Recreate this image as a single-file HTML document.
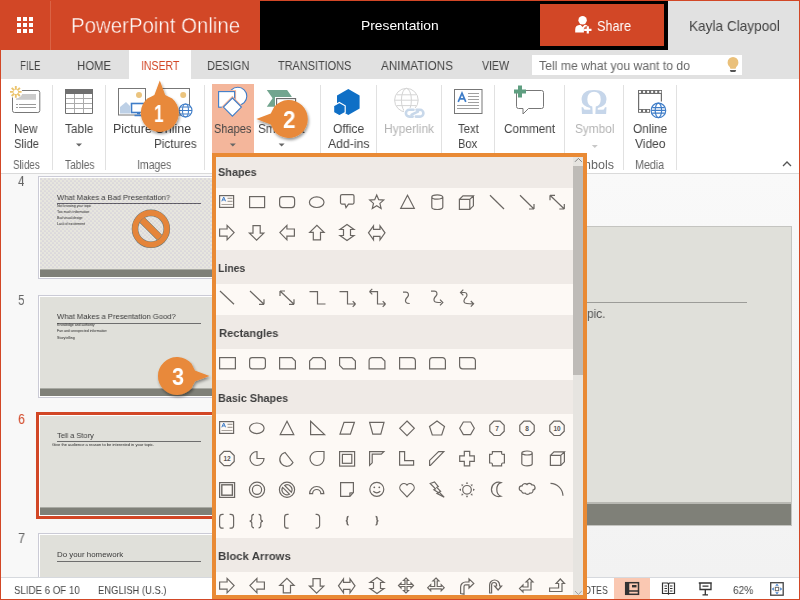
<!DOCTYPE html>
<html><head><meta charset="utf-8"><title>PowerPoint Online</title>
<style>
*{margin:0;padding:0;box-sizing:border-box}
html,body{width:800px;height:600px;overflow:hidden;background:#fff}
body{position:relative;font-family:"Liberation Sans",sans-serif;color:#444}
.a{position:absolute}
.t{position:absolute;white-space:nowrap;line-height:1;transform-origin:0 0;will-change:transform}
svg.full{position:absolute;left:0;top:0;width:800px;height:600px;overflow:visible}
#win{position:absolute;left:0;top:0;width:800px;height:600px;border:1px solid #D24726;pointer-events:none}
#hdr{left:0;top:0;width:260px;height:50px;background:#D24726}
#blk{left:260px;top:0;width:408px;height:50px;background:#000}
#usr{left:668px;top:0;width:132px;height:50px;background:#E1E1E1}
#share{left:540px;top:4px;width:124px;height:42px;background:#D24726}
#tabs{left:0;top:50px;width:800px;height:29px;background:#E1E1E1}
#ins{left:129px;top:50px;width:62px;height:29px;background:#fff}
#search{left:532px;top:55px;width:210px;height:20px;background:#fff}
#rib{left:0;top:79px;width:800px;height:95px;background:#fff;border-bottom:1px solid #DADADA}
.sep{position:absolute;width:1px;top:85px;height:85px;background:#E1E1E1}
#thumbs{left:0;top:174px;width:240px;height:403px;background:#F7F7F7}
#main{left:240px;top:174px;width:560px;height:403px;background:#F4F4F4}
#status{left:0;top:577px;width:800px;height:23px;background:#fff;border-top:1px solid #E1E1E1}
#panel{left:212px;top:153px;width:375px;height:446px;background:#FDF9F5;border:4px solid #E98A35;overflow:hidden}

</style></head><body>
<div class="a" id="hdr"></div>
<div class="a" id="blk"></div>
<div class="a" id="usr"></div>
<div class="a" id="share"></div>
<div class="a" id="tabs"></div>
<div class="a" id="ins"></div>
<div class="a" id="search"></div>
<div class="a" id="rib"></div>
<div class="a" id="thumbs"></div>
<div class="a" id="main"></div>
<div class="a" id="status"></div>
<!-- header decorations -->
<div class="a" style="left:50px;top:0;width:1px;height:50px;background:#E07A5F;opacity:.55"></div>
<svg class="full" viewBox="0 0 800 600">
 <g fill="#fff">
  <rect x="17" y="17" width="4" height="4"/><rect x="23" y="17" width="4" height="4"/><rect x="29" y="17" width="4" height="4"/>
  <rect x="17" y="23" width="4" height="4"/><rect x="23" y="23" width="4" height="4"/><rect x="29" y="23" width="4" height="4"/>
  <rect x="17" y="29" width="4" height="4"/><rect x="23" y="29" width="4" height="4"/><rect x="29" y="29" width="4" height="4"/>
 </g>
 <!-- share person icon -->
 <g fill="#fff">
  <circle cx="582.6" cy="20.2" r="4.2"/>
  <path d="M575.2 32.6v-3.2q0-4.3 5.3-4.6l2 2.2l2.2-2.2q1.6 0.1 2.6 0.8v2.6h-3.4v4.4z"/>
 </g>
 <path d="M587.8 26.2v7.4M584.1 29.9h7.4" stroke="#D24726" stroke-width="4.6"/>
 <path d="M587.8 26.2v7.4M584.1 29.9h7.4" stroke="#fff" stroke-width="2.2"/>
 <!-- bulb -->
 <path d="M733 57a5.4 5.4 0 0 1 5.4 5.4c0 2.2-1.2 3.4-2.2 4.6l-0.6 1.8h-5.2l-0.6-1.8c-1-1.2-2.2-2.4-2.2-4.6a5.4 5.4 0 0 1 5.4-5.4z" fill="#EAC07A"/>
 <path d="M729.8 70h6.4l-0.9 1.9h-4.6z" fill="#555"/>
</svg>
<!-- ribbon separators -->
<div class="sep" style="left:52px"></div>
<div class="sep" style="left:105px"></div>
<div class="sep" style="left:204px"></div>
<div class="sep" style="left:320px"></div>
<div class="sep" style="left:376px"></div>
<div class="sep" style="left:441px"></div>
<div class="sep" style="left:494px"></div>
<div class="sep" style="left:564px"></div>
<div class="sep" style="left:623px"></div>
<div class="sep" style="left:676px"></div>
<!-- shapes highlight -->
<div class="a" style="left:212px;top:84px;width:42px;height:70px;background:#F4B69B"></div>
<svg class="full" viewBox="0 0 800 600">
 <!-- New slide -->
 <rect x="12.5" y="90.5" width="27.3" height="22" rx="2" fill="#fff" stroke="#777"/>
 <path d="M16 94h20v5.8h-20z" fill="#CBCBCB"/>
 <path d="M16 104.5h2M19 104.5h17M16 107.5h2M19 107.5h17" stroke="#999" stroke-width="1"/>
 <circle cx="15.8" cy="91.9" r="6.6" fill="#fff"/>
 <path d="M18.00 91.90L21.60 91.90M17.36 93.46L19.90 96.00M15.80 94.10L15.80 97.70M14.24 93.46L11.70 96.00M13.60 91.90L10.00 91.90M14.24 90.34L11.70 87.80M15.80 89.70L15.80 86.10M17.36 90.34L19.90 87.80" stroke="#EBC46E" stroke-width="1.9"/>
 <!-- Table -->
 <path d="M66 98.5h26M66 103.5h26M66 108.5h26M74.5 94v19M83.5 94v19" stroke="#ABABAB" fill="none"/>
 <rect x="65" y="89" width="28" height="5" fill="#707070"/>
 <path d="M65.5 89v24.5h27V89" stroke="#707070" fill="none"/>
 <path d="M76 143.5h6l-3 3z" fill="#666"/>
 <!-- Picture -->
 <rect x="118.5" y="88.5" width="27" height="26.5" fill="#fff" stroke="#777"/>
 <circle cx="139" cy="95" r="3" fill="#EBC47E"/>
 <path d="M120 113.5L120 107L126 102L130 106L130 113.5Z" fill="#BDD0E6"/>
 <rect x="131.5" y="103.5" width="13.5" height="9" fill="#fff" stroke="#3F7DC8" stroke-width="1.6"/>
 <path d="M137 113.5h3M134.5 115.5h8" stroke="#3F7DC8" stroke-width="1.4"/>
 <!-- Online pictures -->
 <rect x="160.5" y="88.5" width="29" height="26.5" fill="#fff" stroke="#777"/>
 <circle cx="183.2" cy="95" r="3" fill="#EBC47E"/>
 <g stroke="#3F7DC8" stroke-width="1.1" fill="#fff">
  <circle cx="185.5" cy="110.5" r="6.5"/>
  <ellipse cx="185.5" cy="110.5" rx="3" ry="6.5" fill="none"/>
  <path d="M179 110.5h13M180 107h11M180 114h11" fill="none"/>
 </g>
 <!-- Shapes icon -->
 <circle cx="237.8" cy="96.2" r="9" fill="#fff" stroke="#3F7DC8" stroke-width="1.1"/>
 <rect x="218.6" y="91.6" width="16" height="15.6" fill="#fff" stroke="#F4B69B" stroke-width="3"/>
 <rect x="218.6" y="91.6" width="16" height="15.6" fill="#fff" stroke="#3F7DC8" stroke-width="1.1"/>
 <path d="M232.4 98l9 9.1l-9 9.1l-9 -9.1z" fill="#fff" stroke="#F4B69B" stroke-width="3"/>
 <path d="M232.4 98l9 9.1l-9 9.1l-9 -9.1z" fill="#fff" stroke="#3F7DC8" stroke-width="1.1"/>
 <path d="M229.8 143.5h6l-3 3z" fill="#666"/>
 <!-- SmartArt -->
 <path d="M266.8 90h20.3l4.6 6.6l-4.6 10.2h-20.3l5.8-8.6z" fill="#72A58F"/>
 <rect x="275" y="97" width="22" height="17" fill="#fff"/>
 <rect x="276.6" y="98.6" width="19" height="15" fill="#fff" stroke="#666" stroke-width="1.1"/>
 <path d="M278.6 143.5h6l-3 3z" fill="#666"/>
 <!-- Office Add-ins -->
 <path d="M348.3 89l11.3 6.5v13l-11.3 6.5l-11.3 -6.5v-13z" fill="#0F6FC6"/>
 <path d="M339.4 102.5l5.8 3.3v6.6l-5.8 3.3l-5.8 -3.3v-6.6z" fill="#0F6FC6" stroke="#fff" stroke-width="1.2"/>
 <!-- Hyperlink -->
 <g stroke="#D4D4D4" stroke-width="1" fill="none">
  <circle cx="406.4" cy="100.2" r="11.8"/>
  <ellipse cx="406.4" cy="100.2" rx="5" ry="11.8"/>
  <path d="M394.6 100.2h23.6M396.5 94.8h19.8M396.5 105.6h19.8"/>
 </g>
 <rect x="404" y="108" width="21" height="10" fill="#fff"/>
 <g stroke="#C8D8EA" stroke-width="2.6" fill="none" stroke-linecap="round">
  <path d="M413.5 109.8h-4.2a3.4 3.4 0 0 0 0 6.8h3.4"/>
  <path d="M415.8 116.6h4.2a3.4 3.4 0 0 0 0-6.8h-3.4"/>
  <path d="M411.6 114.6l6.4-3"/>
 </g>
 <!-- Text Box -->
 <rect x="454.5" y="89.5" width="27.5" height="24" fill="#fff" stroke="#777"/>
 <path d="M458.2 101.8l3.8-8.6l3.8 8.6M459.5 98.8h5" stroke="#3F7DC8" stroke-width="1.7" fill="none"/>
 <path d="M468 93.5h11M468 96.5h11M468 99.5h11M468 102.5h11M457 105.5h22M457 108.5h22" stroke="#A0A0A0"/>
 <!-- Comment -->
 <path d="M518.5 90.5h23a2 2 0 0 1 2 2v14a2 2 0 0 1 -2 2h-13l-5.5 5.5v-5.5h-4.5a2 2 0 0 1 -2 -2v-14a2 2 0 0 1 2 -2z" fill="#fff" stroke="#777"/>
 <path d="M520 85.5v12M514 91.5h12" stroke="#5E9E80" stroke-width="4"/>
 <!-- Symbol -->
 <path d="M591.8 145h6l-3 3z" fill="#C8C8C8"/>
 <!-- Online Video -->
 <rect x="638" y="90" width="24" height="4" fill="#6E6E6E"/>
 <rect x="639.00" y="90.9" width="2" height="2" fill="#fff"/><rect x="643.05" y="90.9" width="2" height="2" fill="#fff"/><rect x="647.10" y="90.9" width="2" height="2" fill="#fff"/><rect x="651.15" y="90.9" width="2" height="2" fill="#fff"/><rect x="655.20" y="90.9" width="2" height="2" fill="#fff"/><rect x="659.25" y="90.9" width="2" height="2" fill="#fff"/>
 <path d="M638.6 94v15M661.4 94v7.6" stroke="#6E6E6E" stroke-width="1.2"/>
 <rect x="638" y="109" width="12" height="3.8" fill="#6E6E6E"/>
 <rect x="639.00" y="109.9" width="2" height="2" fill="#fff"/><rect x="643.05" y="109.9" width="2" height="2" fill="#fff"/><rect x="647.10" y="109.9" width="2" height="2" fill="#fff"/>
 <g stroke="#3F7DC8" stroke-width="1.2" fill="#fff">
  <circle cx="658.4" cy="110.4" r="7.3"/>
  <ellipse cx="658.4" cy="110.4" rx="3.2" ry="7.3" fill="none"/>
  <path d="M651.2 110.4h14.4M652.2 107.6h12.4M652.2 113.2h12.4" fill="none"/>
 </g>
 <!-- collapse caret -->
 <path d="M783 166l4-4l4 4" stroke="#555" stroke-width="1.3" fill="none"/>
</svg>
<div class="t" style="left:579.7px;top:84.9px;font-size:35px;font-family:'Liberation Serif';color:#C6D6EA;font-weight:bold">&#937;</div>
<!-- main area gradient -->
<div class="a" style="left:216px;top:174px;width:584px;height:403px;background:linear-gradient(#F9F9F9,#F2F2F2)"></div>
<div class="a" style="left:0;top:174px;width:216px;height:403px;background:#F8F8F8"></div>
<!-- main slide -->
<div class="a" style="left:560px;top:226px;width:232px;height:300px;background:#E0E0DA;border:1px solid #C4C4C0"></div>
<div class="a" style="left:561px;top:502px;width:230px;height:2px;background:#B9B9B3"></div>
<div class="a" style="left:561px;top:504px;width:230px;height:21px;background:#7F8078"></div>
<div class="a" style="left:561px;top:301.5px;width:186px;height:1.6px;background:#9C9C98"></div>
<!-- thumbnails -->
<style>
.th{position:absolute;left:38px;width:180px;border:1px solid #CBCBD6;padding:1px;background:#fff}
.sl{position:relative;width:176px;height:99px;background:#E0E0DA;overflow:hidden}
.band{position:absolute;left:0;bottom:0;width:100%;height:8px;background:#7F8078;border-top:1px solid #A9AAA3}
.ul{position:absolute;left:17.4px;width:144px;height:1px;background:#6E6E6E}
.dots{background-color:#E7E6DE}
</style>
<div class="th" style="top:176px"><div class="sl dots">
 <div class="ul" style="top:25px;height:1.3px;background:#5C5A60"></div>
 <div class="band"></div>
</div></div>
<svg class="full" viewBox="0 0 800 600">
 <defs><pattern id="dp" x="40" y="178" width="4" height="4" patternUnits="userSpaceOnUse">
  <circle cx="1" cy="1" r="0.6" fill="#9D8FD0"/><circle cx="3" cy="3" r="0.6" fill="#9D8FD0"/>
 </pattern></defs>
 <rect x="40" y="178" width="176" height="90.5" fill="url(#dp)" opacity="0.6"/>
</svg>
<svg class="full" viewBox="0 0 800 600">
 <defs><clipPath id="ic"><circle cx="150.9" cy="228.8" r="12.7"/></clipPath></defs>
 <circle cx="150.9" cy="228.8" r="15.9" fill="none" stroke="#6A7A78" stroke-width="6.6"/>
 <circle cx="150.9" cy="228.8" r="15.9" fill="none" stroke="#E5853A" stroke-width="5.6"/>
 <g clip-path="url(#ic)">
  <path d="M139.6 217.5L162.2 240.1" stroke="#6A7A78" stroke-width="7.4"/>
  <path d="M139.6 217.5L162.2 240.1" stroke="#E5853A" stroke-width="6.4"/>
 </g>
</svg>
<div class="th" style="top:295px"><div class="sl">
 <div class="ul" style="top:25.5px"></div>
 <div class="band"></div>
</div></div>
<div class="th" style="left:36px;top:412px;border:3px solid #D24726;padding:1px;width:184px"><div class="sl">
 <div class="ul" style="top:25px"></div>
 <div class="band"></div>
</div></div>
<div class="th" style="top:533px"><div class="sl">
 <div class="ul" style="top:26px"></div>
</div></div>
<!-- status bar -->
<div class="a" style="left:0;top:577px;width:800px;height:23px;background:#fff;border-top:1px solid #D6D9DE"></div>
<div class="a" style="left:614px;top:578px;width:36px;height:22px;background:#FAC8B2"></div>
<svg class="full" viewBox="0 0 800 600">
 <g fill="none" stroke="#333" stroke-width="1.5">
  <rect x="625.7" y="582.7" width="12.8" height="11.6"/>
  <path d="M628.5 582.7v11.6M628.5 591h10"/>
 </g>
 <rect x="625.7" y="582.7" width="3" height="11.6" fill="#333"/>
 <rect x="632" y="585" width="4.5" height="2.4" fill="#333"/>
 <g fill="none" stroke="#333" stroke-width="1.2">
  <path d="M662.5 583v10.5h12V583h-5.2l-0.8 0.8l-0.8-0.8z"/>
  <path d="M668.5 583.8v11M664.5 586h2.5M664.5 588.5h2.5M664.5 591h2.5M670 586h2.5M670 588.5h2.5M670 591h2.5"/>
 </g>
 <g fill="none" stroke="#333" stroke-width="1.3">
  <path d="M698.8 583h13M700 583.5v6h11v-6M705.3 589.5v5M702.5 594.8h5.5M702.5 586.2h6"/>
 </g>
 <rect x="770.7" y="582.7" width="12.5" height="12.5" fill="none" stroke="#444" stroke-width="1.3"/>
 <rect x="775.3" y="587.3" width="3.4" height="3.4" fill="none" stroke="#666" stroke-width="1"/>
 <g fill="#3F7DC8">
  <path d="M777 583.8l1.8 2h-3.6z"/><path d="M777 594.2l1.8-2h-3.6z"/>
  <path d="M771.8 589l2-1.8v3.6z"/><path d="M782.2 589l-2-1.8v3.6z"/>
 </g>
</svg>

<div class="t" style="left:71.19px;top:14.75px;font-size:22.5px;color:#fff;transform:scaleX(0.908);-webkit-text-stroke:0.4px #D24726;">PowerPoint Online</div>
<div class="t" style="left:360.95px;top:19.43px;font-size:13.2px;color:#fff;transform:scaleX(1.048);">Presentation</div>
<div class="t" style="left:596.60px;top:19.41px;font-size:14.4px;color:#fff;transform:scaleX(0.885);">Share</div>
<div class="t" style="left:689.05px;top:19.41px;font-size:14.4px;color:#444;transform:scaleX(0.947);">Kayla Claypool</div>
<div class="t" style="left:19.75px;top:59.00px;font-size:13px;color:#444;transform:scaleX(0.747);">FILE</div>
<div class="t" style="left:77.38px;top:59.00px;font-size:13px;color:#444;transform:scaleX(0.874);">HOME</div>
<div class="t" style="left:140.69px;top:59.00px;font-size:13px;color:#D24726;transform:scaleX(0.807);">INSERT</div>
<div class="t" style="left:207.45px;top:59.00px;font-size:13px;color:#444;transform:scaleX(0.850);">DESIGN</div>
<div class="t" style="left:278.40px;top:59.00px;font-size:13px;color:#444;transform:scaleX(0.839);">TRANSITIONS</div>
<div class="t" style="left:381.20px;top:59.00px;font-size:13px;color:#444;transform:scaleX(0.901);">ANIMATIONS</div>
<div class="t" style="left:482.40px;top:59.00px;font-size:13px;color:#444;transform:scaleX(0.813);">VIEW</div>
<div class="t" style="left:538.60px;top:59.92px;font-size:12.5px;color:#666;transform:scaleX(0.979);">Tell me what you want to do</div>
<div class="t" style="left:13.66px;top:123.22px;font-size:12.5px;color:#444;transform:scaleX(0.937);">New</div>
<div class="t" style="left:13.50px;top:137.82px;font-size:12.5px;color:#444;transform:scaleX(0.898);">Slide</div>
<div class="t" style="left:13.00px;top:158.72px;font-size:12.5px;color:#666;transform:scaleX(0.787);">Slides</div>
<div class="t" style="left:64.70px;top:123.22px;font-size:12.5px;color:#444;transform:scaleX(0.946);">Table</div>
<div class="t" style="left:64.70px;top:158.72px;font-size:12.5px;color:#666;transform:scaleX(0.814);">Tables</div>
<div class="t" style="left:113.40px;top:123.22px;font-size:12.5px;color:#444;">Picture</div>
<div class="t" style="left:155.00px;top:123.22px;font-size:12.5px;color:#444;">Online</div>
<div class="t" style="left:154.06px;top:137.82px;font-size:12.5px;color:#444;transform:scaleX(0.943);">Pictures</div>
<div class="t" style="left:137.16px;top:158.72px;font-size:12.5px;color:#666;transform:scaleX(0.838);">Images</div>
<div class="t" style="left:213.80px;top:123.22px;font-size:12.5px;color:#444;transform:scaleX(0.880);">Shapes</div>
<div class="t" style="left:257.80px;top:123.22px;font-size:12.5px;color:#444;transform:scaleX(0.947);">SmartArt</div>
<div class="t" style="left:332.75px;top:123.22px;font-size:12.5px;color:#444;transform:scaleX(0.959);">Office</div>
<div class="t" style="left:327.90px;top:137.82px;font-size:12.5px;color:#444;transform:scaleX(0.978);">Add-ins</div>
<div class="t" style="left:383.64px;top:123.22px;font-size:12.5px;color:#B4B4B4;transform:scaleX(0.962);">Hyperlink</div>
<div class="t" style="left:458.20px;top:123.22px;font-size:12.5px;color:#444;transform:scaleX(0.908);">Text</div>
<div class="t" style="left:458.31px;top:137.82px;font-size:12.5px;color:#444;transform:scaleX(0.892);">Box</div>
<div class="t" style="left:504.20px;top:123.22px;font-size:12.5px;color:#444;transform:scaleX(0.943);">Comment</div>
<div class="t" style="left:575.00px;top:123.22px;font-size:12.5px;color:#B4B4B4;transform:scaleX(0.946);">Symbol</div>
<div class="t" style="left:566.02px;top:158.72px;font-size:12.5px;color:#666;">Symbols</div>
<div class="t" style="left:632.80px;top:123.22px;font-size:12.5px;color:#444;transform:scaleX(0.945);">Online</div>
<div class="t" style="left:634.80px;top:137.82px;font-size:12.5px;color:#444;transform:scaleX(0.962);">Video</div>
<div class="t" style="left:634.74px;top:158.72px;font-size:12.5px;color:#666;transform:scaleX(0.858);">Media</div>
<div class="t" style="left:17.75px;top:174.40px;font-size:14.3px;color:#666;transform:scaleX(0.812);">4</div>
<div class="t" style="left:17.75px;top:292.90px;font-size:14.3px;color:#666;transform:scaleX(0.812);">5</div>
<div class="t" style="left:17.80px;top:412.20px;font-size:14.3px;color:#D24726;transform:scaleX(0.875);">6</div>
<div class="t" style="left:17.80px;top:530.90px;font-size:14.3px;color:#666;transform:scaleX(0.900);">7</div>
<div class="t" style="left:57.40px;top:194.11px;font-size:7.9px;color:#3A3A3A;transform:scaleX(0.961);">What Makes a Bad Presentation?</div>
<div class="t" style="left:57.00px;top:204.75px;font-size:3.6px;color:#262626;transform:scaleX(0.944);">Not knowing your topic</div>
<div class="t" style="left:57.00px;top:210.75px;font-size:3.6px;color:#262626;transform:scaleX(0.946);">Too much information</div>
<div class="t" style="left:57.00px;top:217.45px;font-size:3.6px;color:#262626;transform:scaleX(0.905);">Bad visual design</div>
<div class="t" style="left:57.00px;top:223.45px;font-size:3.6px;color:#262626;transform:scaleX(0.934);">Lack of excitement</div>
<div class="t" style="left:57.40px;top:313.11px;font-size:7.9px;color:#3A3A3A;transform:scaleX(0.967);">What Makes a Presentation Good?</div>
<div class="t" style="left:57.00px;top:323.95px;font-size:3.6px;color:#262626;transform:scaleX(0.943);">Knowledge and authority</div>
<div class="t" style="left:57.00px;top:329.95px;font-size:3.6px;color:#262626;transform:scaleX(0.970);">Fun and unexpected information</div>
<div class="t" style="left:57.00px;top:336.95px;font-size:3.6px;color:#262626;transform:scaleX(0.984);">Storytelling</div>
<div class="t" style="left:57.30px;top:432.11px;font-size:7.9px;color:#3A3A3A;transform:scaleX(0.944);">Tell a Story</div>
<div class="t" style="left:51.70px;top:443.65px;font-size:3.6px;color:#262626;transform:scaleX(1.120);">Give the audience a reason to be interested in your topic.</div>
<div class="t" style="left:57.40px;top:551.01px;font-size:7.9px;color:#3A3A3A;">Do your homework</div>
<div class="t" style="left:14.00px;top:584.56px;font-size:10.8px;color:#444;transform:scaleX(0.897);">SLIDE 6 OF 10</div>
<div class="t" style="left:98.00px;top:584.56px;font-size:10.8px;color:#444;transform:scaleX(0.872);">ENGLISH (U.S.)</div>
<div class="t" style="left:577.80px;top:584.56px;font-size:10.8px;color:#444;transform:scaleX(0.800);">NOTES</div>
<div class="t" style="left:732.50px;top:584.56px;font-size:10.8px;color:#444;transform:scaleX(0.936);">62%</div>
<div class="t" style="left:587.00px;top:307.00px;font-size:13px;color:#555;transform:scaleX(0.918);">pic.</div>
<div class="a" id="panel">
 <div class="a" style="left:0;top:0;width:357px;height:31px;background:#EFEAE6"></div>
 <div class="a" style="left:0;top:93px;width:357px;height:34px;background:#EFEAE6"></div>
 <div class="a" style="left:0;top:158px;width:357px;height:34px;background:#EFEAE6"></div>
 <div class="a" style="left:0;top:223px;width:357px;height:34px;background:#EFEAE6"></div>
 <div class="a" style="left:0;top:381px;width:357px;height:34px;background:#EFEAE6"></div>
 <!-- scrollbar -->
 <div class="a" style="left:357px;top:0;width:10px;height:438px;background:#E6E4E0"></div>
 <div class="a" style="left:357px;top:9px;width:10px;height:209px;background:#BEBBB7"></div>
 <svg class="a" style="left:0;top:0" width="367" height="438" viewBox="216 157 367 438">
  <path d="M575 161.8l3.4-3.4l3.4 3.4" fill="none" stroke="#777" stroke-width="0.9"/>
  <path d="M575 591l3.4 3.4l3.4-3.4" fill="none" stroke="#999" stroke-width="0.9"/>
  <g fill="none" stroke="#6B6763" stroke-width="1.2" stroke-linejoin="miter">
  <!-- Shapes row1 cy 202 -->
   <rect x="219.6" y="195.6" width="14" height="11.8"/>
   <path d="M227.5 198.3h5M227.5 201.3h5M221.5 204.5h11" stroke="#A9A39D"/>
   <path d="M221.8 201.3l1.9-4.3l1.9 4.3M222.5 199.9h2.4" stroke="#3F7DC8" stroke-width="1"/>
   <rect x="249.6" y="196.6" width="15" height="11"/>
   <rect x="279.6" y="196.6" width="15" height="11" rx="3"/>
   <ellipse cx="316.7" cy="202.2" rx="7.3" ry="5.3"/>
   <path d="M342 194.6h10.5a1.5 1.5 0 0 1 1.5 1.5v6.5a1.5 1.5 0 0 1 -1.5 1.5h-4l-2.5 3.5l-1-3.5h-3a1.5 1.5 0 0 1 -1.5 -1.5v-6.5a1.5 1.5 0 0 1 1.5 -1.5z"/>
   <path d="M376.7 195l2 4.7l5 0.4l-3.8 3.3l1.2 5l-4.4-2.7l-4.4 2.7l1.2-5l-3.8-3.3l5-0.4z"/>
   <path d="M407.5 195.3l6.8 13h-13.6z"/>
   <path d="M431.8 197v10.3a5.5 2.2 0 0 0 11 0V197a5.5 2.2 0 0 0 -11 0a5.5 2.2 0 0 0 11 0"/>
   <path d="M459.4 199.4h10.4v10h-10.4zM459.4 199.4l3.6-3.6h10.4l-3.6 3.6M473.4 195.8v10l-3.6 3.6"/>
   <path d="M490 195.3l14 13.7"/>
   <path d="M520 195.3l14 13.7M534 209v-5M534 209h-5"/>
   <path d="M550 195.3l14.3 13.7M564.3 209v-5M564.3 209h-5M550 195.3v5M550 195.3h5"/>
  <!-- Shapes row2 cy 232.5 -->
   <path d="M219.6 229h7.5v-3.6l7 7.2l-7 7.2v-3.6h-7.5z"/>
   <path d="M253 225.6h7.2v7.5h3.6l-7.2 7l-7.2-7h3.6z"/>
   <path d="M294.4 229h-7.5v-3.6l-7 7.2l7 7.2v-3.6h7.5z"/>
   <path d="M313.3 239.8h7.2v-7.5h3.6l-7.2-7l-7.2 7h3.6z"/>
   <path d="M343.5 229.5v6l-3.5 0l7 5l7-5h-3.5v-6h3.5l-7-5l-7 5z"/>
   <path d="M373.5 229.3h6.5l0-3.5l5 7l-5 7v-3.5h-6.5v3.5l-5-7l5-7z"/>
  <!-- Lines row cy 297.5 -->
   <path d="M220 291l14 13.3"/>
   <path d="M250 291l14 13.3M264 304.3v-5M264 304.3h-5"/>
   <path d="M280 291l14 13.3M294 304.3v-5M294 304.3h-5M280 291v5M280 291h5"/>
   <path d="M309.5 291.6h8v12.4h8"/>
   <path d="M339.5 291.6h8v12.4h8M355.5 304l-2.8-2.8M355.5 304l-2.8 2.8"/>
   <path d="M369.5 291.6h8v12.4h8M385.5 304l-2.8-2.8M385.5 304l-2.8 2.8M369.5 291.6l2.8-2.8M369.5 291.6l2.8 2.8"/>
   <path d="M403 292.2h3c2.5 0 3.3 3 1.5 4.8c-2 2-2.6 3.6-1.6 5.2c0.6 1 1.5 1.3 3.8 1.3"/>
   <path d="M431 291.2h3.5c2.5 0 3.3 3 1.5 4.8c-2 2-2.6 3.6-1.6 5.2c0.6 1 1.5 1.3 6.5 1.3M440 299.7l2.8 2.8l-2.8 2.8"/>
   <path d="M460.5 292.5h4c2.5 0 3.3 3 1.5 4.8c-2 2-2.6 3.6-1.6 5.2c0.6 1 1.5 1.3 8.5 1.3M463.3 289.7l-2.8 2.8l2.8 2.8M470.8 301l2.8 2.8l-2.8 2.8"/>
  <!-- Rectangles cy 363 -->
   <rect x="219.6" y="357.6" width="15.8" height="11.2"/>
   <rect x="249.6" y="357.6" width="15.8" height="11.2" rx="2.5"/>
   <path d="M279.6 357.6h12.3l3.5 3.5v7.7h-15.8z"/>
   <path d="M313.1 357.6h8.8l3.5 3.5v7.7h-15.8v-7.7z"/>
   <path d="M339.6 357.6h12.3l3.5 3.5v7.7h-12.3l-3.5-3.5z"/>
   <path d="M372.6 357.6h8.8l3.5 3.5v7.7h-15.8v-8.2a3 3 0 0 1 3.5 -3z"/>
   <path d="M399.6 357.6h12.3a3.5 3.5 0 0 1 3.5 3.5v7.7h-15.8z"/>
   <path d="M432.6 357.6h9.8a3 3 0 0 1 3 3v8.2h-15.8v-8.2a3 3 0 0 1 3 -3z"/>
   <path d="M459.6 357.6h12.8a3 3 0 0 1 3 3v8.2h-12.8a3 3 0 0 1 -3 -3z"/>
  <!-- Basic r1 cy 428.5 -->
   <rect x="219.6" y="421.6" width="14" height="11.8"/>
   <path d="M227.5 424.3h5M227.5 427.3h5M221.5 430.5h11" stroke="#A9A39D"/>
   <path d="M221.8 427.3l1.9-4.3l1.9 4.3M222.5 425.9h2.4" stroke="#3F7DC8" stroke-width="1"/>
   <ellipse cx="256.8" cy="428.3" rx="7.3" ry="5.3"/>
   <path d="M287 421.3l6.8 13.3h-13.6z"/>
   <path d="M310.6 421.3l14 13.3h-14z"/>
   <path d="M344 422.3h10.4l-4 11.8h-10.4z"/>
   <path d="M369.6 422.3h14.4l-3.2 11.8h-8z"/>
   <path d="M407 421l7.3 7.3l-7.3 7.3l-7.3-7.3z"/>
   <path d="M437 421l7.5 5.4l-2.8 8.6h-9.4l-2.8-8.6z"/>
   <path d="M474.30 428.30L470.65 434.62L463.35 434.62L459.70 428.30L463.35 421.98L470.65 421.98Z"/>
   <path d="M504.21 431.28L499.98 435.51L494.02 435.51L489.79 431.28L489.79 425.32L494.02 421.09L499.98 421.09L504.21 425.32Z"/>
   <path d="M534.21 431.28L529.98 435.51L524.02 435.51L519.79 431.28L519.79 425.32L524.02 421.09L529.98 421.09L534.21 425.32Z"/>
   <path d="M564.21 431.28L559.98 435.51L554.02 435.51L549.79 431.28L549.79 425.32L554.02 421.09L559.98 421.09L564.21 425.32Z"/>
  <!-- Basic r2 cy 458.5 -->
   <path d="M234.21 461.48L229.98 465.71L224.02 465.71L219.79 461.48L219.79 455.52L224.02 451.29L229.98 451.29L234.21 455.52Z"/>
   <path d="M264 458.5a7 7 0 1 1 -7 -7v7z"/>
   <path d="M293 462.5a7 7 0 1 1 -8-10z"/>
   <path d="M324 451.5v7a7 7 0 1 1 -7 -7z"/>
   <rect x="339.6" y="451.6" width="15" height="14.5"/><rect x="342.4" y="454.4" width="9.4" height="8.9"/>
   <path d="M369.6 451.6h14.3l-2.6 2.6h-9.1v8.6l-2.6 2.6z"/>
   <path d="M399.6 451.6h5v9h9v4.6h-14z"/>
   <path d="M438.6 451.6H443.8L430.4 465.3H429.6V460.4Z"/>
   <path d="M464.3 451.3h5.4v4.6h4.6v5.4h-4.6v4.6h-5.4v-4.6h-4.6v-5.4h4.6z"/>
   <path d="M492.4 451.6h9.2v1.6q0 1.2 1.2 1.2h1.6v8.6h-1.6q-1.2 0-1.2 1.2v1.6h-9.2v-1.6q0-1.2-1.2-1.2h-1.6v-8.6h1.6q1.2 0 1.2-1.2z"/>
   <path d="M521.8 453v10.8a5.2 2 0 0 0 10.4 0V453a5.2 2 0 0 0 -10.4 0a5.2 2 0 0 0 10.4 0"/>
   <path d="M550.4 455.4h10.4v10h-10.4zM550.4 455.4l3.6-3.6h10.4l-3.6 3.6M564.4 451.8v10l-3.6 3.6"/>
  <!-- Basic r3 cy 489.5 -->
   <rect x="219.6" y="482.6" width="15" height="14.8"/><rect x="221.8" y="484.8" width="10.6" height="10.4" stroke-width="1.4"/>
   <circle cx="257" cy="489.8" r="7.6"/><circle cx="257" cy="489.8" r="4.6"/>
   <circle cx="287" cy="489.8" r="7.6"/><path d="M284.6 485.42A5 5 0 0 1 291.38 492.2ZM289.4 494.18A5 5 0 0 1 282.62 487.4Z"/>
   <path d="M309.6 493.6a7 7 0 0 1 14.2 0h-3a4 4 0 0 0 -8.2 0z"/>
   <path d="M340.6 482.6h12.8v10l-3.5 3.8h-9.3zM353.4 492.6l-3.5 0.4v3.4"/>
   <circle cx="376.8" cy="489.3" r="7"/>
   <circle cx="374.3" cy="487.3" r="0.9" fill="#6B6763" stroke="none"/><circle cx="379.3" cy="487.3" r="0.9" fill="#6B6763" stroke="none"/>
   <path d="M373.3 491.2q3.5 3.2 7 0"/>
   <path d="M407 496.8l-6.2-6.4a4 4 0 0 1 6.2-5.4a4 4 0 0 1 6.2 5.4z"/>
   <path d="M430.2 483.5l4.3-1.6l3.8 4.6l-1.5 0.9l3.8 3.9l-1.4 0.8l5 5l-7.2-3.6l1.5-0.8l-4.6-3l1.6-0.9z"/>
   <circle cx="467" cy="489.8" r="4.3"/>
   <path d="M467.00 481.80L468.20 483.80L465.80 483.80ZM472.66 484.14L472.09 486.41L470.39 484.71ZM475.00 489.80L473.00 491.00L473.00 488.60ZM472.66 495.46L470.39 494.89L472.09 493.19ZM467.00 497.80L465.80 495.80L468.20 495.80ZM461.34 495.46L461.91 493.19L463.61 494.89ZM459.00 489.80L461.00 488.60L461.00 491.00ZM461.34 484.14L463.61 484.71L461.91 486.41Z" fill="#6B6763" stroke="none"/>
   <path d="M501 482.6a7.2 7.2 0 1 0 0 13.6a5.5 7 0 0 1 0 -13.6z"/>
   <path d="M521.5 491a2.5 2.5 0 0 1 0.5-5a3 3 0 0 1 5-1.5a3 3 0 0 1 5 0.5a2.5 2.5 0 0 1 1 5a2.5 2.5 0 0 1 -3 3a3 3 0 0 1 -5 0a2.5 2.5 0 0 1 -3.5 -2z"/>
   <path d="M550.5 483.3a13 13 0 0 1 12.5 12.5"/>
  <!-- Basic r4 cy 521 -->
   <path d="M223.6 514.4h-1.2a2.8 2.8 0 0 0 -2.8 2.8v8.2a2.8 2.8 0 0 0 2.8 2.8h1.2M229.6 514.4h1.2a2.8 2.8 0 0 1 2.8 2.8v8.2a2.8 2.8 0 0 1 -2.8 2.8h-1.2"/>
   <path d="M254 514.4a2.2 2.2 0 0 0 -2.2 2.2v2.3a2.2 2.2 0 0 1 -2.2 2.2a2.2 2.2 0 0 1 2.2 2.2v2.3a2.2 2.2 0 0 0 2.2 2.2M258.6 514.4a2.2 2.2 0 0 1 2.2 2.2v2.3a2.2 2.2 0 0 0 2.2 2.2a2.2 2.2 0 0 0 -2.2 2.2v2.3a2.2 2.2 0 0 1 -2.2 2.2"/>
   <path d="M288.6 514.4h-1.2a2.8 2.8 0 0 0 -2.8 2.8v8.2a2.8 2.8 0 0 0 2.8 2.8h1.2"/>
   <path d="M315.6 514.4h1.2a2.8 2.8 0 0 1 2.8 2.8v8.2a2.8 2.8 0 0 1 -2.8 2.8h-1.2"/>
   <path d="M348.6 516.6a1.4 1.4 0 0 0 -1.4 1.4v1.4a1.4 1.4 0 0 1 -1.4 1.4a1.4 1.4 0 0 1 1.4 1.4v1.4a1.4 1.4 0 0 0 1.4 1.4" stroke-width="1.5"/>
   <path d="M375.6 516.6a1.4 1.4 0 0 1 1.4 1.4v1.4a1.4 1.4 0 0 0 1.4 1.4a1.4 1.4 0 0 0 -1.4 1.4v1.4a1.4 1.4 0 0 1 -1.4 1.4" stroke-width="1.5"/>
  <!-- Block arrows cy 585.5 -->
   <path d="M219.6 582h7.5v-3.6l7 7.2l-7 7.2v-3.6h-7.5z"/>
   <path d="M264.4 582h-7.5v-3.6l-7 7.2l7 7.2v-3.6h7.5z"/>
   <path d="M283.3 592.8h7.2v-7.5h3.6l-7.2-7l-7.2 7h3.6z"/>
   <path d="M313 578.6h7.2v7.5h3.6l-7.2 7l-7.2-7h3.6z"/>
   <path d="M343.5 582.3h6.5l0-3.5l5 7l-5 7v-3.5h-6.5v3.5l-5-7l5-7z"/>
   <path d="M373.5 582.5v6l-3.5 0l7 5l7-5h-3.5v-6h3.5l-7-5l-7 5z"/>
   <path d="M406 578l2.5 2.5h-1.5v4h4v-1.5l2.5 2.5l-2.5 2.5v-1.5h-4v4h1.5l-2.5 2.5l-2.5-2.5h1.5v-4h-4v1.5l-2.5-2.5l2.5-2.5v1.5h4v-4h-1.5z"/>
   <path d="M436 578l3 3h-1.8v5.5h4v-1.8l3 3l-3 3v-1.8h-10.5v1.8l-3-3l3-3v1.8h4v-5.5h-1.8z"/>
   <path d="M460.6 593.6v-6.6a5 5 0 0 1 5 -5h3.4v-3.2l4.8 4.6l-4.8 4.6v-3.2h-3.4a1.6 1.6 0 0 0 -1.6 1.6v7.8z"/>
   <path d="M489.6 593v-8a5 5 0 0 1 10 0v1h2l-3.5 4l-3.5-4h2v-1a2.5 2.5 0 0 0 -5 0v8z"/>
   <path d="M529.5 578.5l3.5 3.5h-2v8h-8v2l-3.5-3.5l3.5-3.5v2h5v-5h-2z"/>
   <path d="M549.6 588h9v-4.5h-2.5l4.2-4.5l4.2 4.5h-2.5v8h-12.4z"/>
  </g>
  <g fill="#555" font-family="Liberation Sans" font-size="6.5" font-weight="bold" text-anchor="middle">
   <text x="497" y="430.7">7</text><text x="527" y="430.7">8</text><text x="557" y="430.7">10</text>
   <text x="227" y="460.7">12</text>
  </g>
 </svg>
<div class="t" style="left:1.90px;top:9.40px;font-size:11.7px;color:#3F3F3F;font-weight:bold;transform:scaleX(0.932);">Shapes</div>
<div class="t" style="left:2.00px;top:105.10px;font-size:11.7px;color:#3F3F3F;font-weight:bold;transform:scaleX(0.893);">Lines</div>
<div class="t" style="left:2.50px;top:170.10px;font-size:11.7px;color:#3F3F3F;font-weight:bold;transform:scaleX(0.955);">Rectangles</div>
<div class="t" style="left:2.40px;top:235.40px;font-size:11.7px;color:#3F3F3F;font-weight:bold;transform:scaleX(0.923);">Basic Shapes</div>
<div class="t" style="left:2.25px;top:393.10px;font-size:11.7px;color:#3F3F3F;font-weight:bold;transform:scaleX(0.972);">Block Arrows</div>
</div>

<svg class="full" viewBox="0 0 800 600">
 <defs>
  <filter id="sh" x="-40%" y="-40%" width="180%" height="180%">
   <feGaussianBlur in="SourceAlpha" stdDeviation="1.5"/>
   <feOffset dx="1.2" dy="1.8" result="b"/>
   <feComponentTransfer><feFuncA type="linear" slope="0.42"/></feComponentTransfer>
   <feMerge><feMergeNode/><feMergeNode in="SourceGraphic"/></feMerge>
  </filter>
 </defs>
 <g fill="#E8893A" filter="url(#sh)">
  <path transform="translate(159.8 112.9)" d="M0 -32.5L-5.4 -18.0Q-8.6 -16.4 -12.4 -14.4A19 19 0 1 0 12.4 -14.4Q8.6 -16.4 5.4 -18.0Z"/>
  <path transform="translate(288.8 119) rotate(-90)" d="M0 -32.5L-5.4 -18.0Q-8.6 -16.4 -12.4 -14.4A19 19 0 1 0 12.4 -14.4Q8.6 -16.4 5.4 -18.0Z"/>
  <path transform="translate(177 376) rotate(90)" d="M0 -32.5L-5.4 -18.0Q-8.6 -16.4 -12.4 -14.4A19 19 0 1 0 12.4 -14.4Q8.6 -16.4 5.4 -18.0Z"/>
 </g>
</svg>

<div class="t" style="left:154.18px;top:102.81px;font-size:23.5px;color:#fff;font-weight:bold;transform:scaleX(0.725);">1</div>
<div class="t" style="left:283.00px;top:109.21px;font-size:23.5px;color:#fff;font-weight:bold;transform:scaleX(0.954);">2</div>
<div class="t" style="left:172.00px;top:366.11px;font-size:23.5px;color:#fff;font-weight:bold;transform:scaleX(0.923);">3</div>
<div id="win"></div>
</body></html>
